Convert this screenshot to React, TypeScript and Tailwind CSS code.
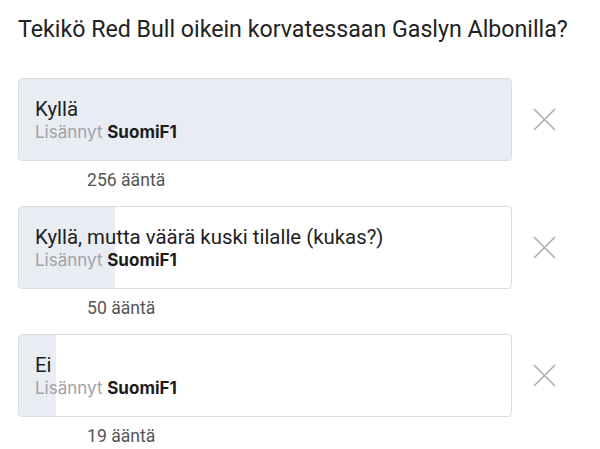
const options = [
  { label: 'Kyllä', votes: 256 },
  { label: 'Kyllä, mutta väärä kuski tilalle (kukas?)', votes: 50 },
  { label: 'Ei', votes: 19 },
];

const max = Math.max(...options.map((o) => o.votes));

export default function App() {
  return (
    <div className="w-[600px] h-[449px] bg-white overflow-hidden font-['Roboto',sans-serif]">
      <h1 className="pl-[18px] pt-[15px] text-[23.2px] leading-[28px] text-[#222222]">
        Tekikö Red Bull oikein korvatessaan Gaslyn Albonilla?
      </h1>

      <div className="mt-[35px] pl-[18px]">
        {options.map((o) => (
          <div key={o.label}>
            <div className="flex items-center">
              <div className="relative w-[494px] h-[83px] rounded-[4px] border border-[#d9dce2] bg-white overflow-hidden">
                {/* vote share bar */}
                <div
                  className="absolute inset-y-0 left-0 bg-[#e9ecf3]"
                  style={{ width: `${(o.votes / max) * 100}%` }}
                />
                <div className="relative h-full flex flex-col justify-center pl-[16px]">
                  <div className="text-[20.4px] leading-[24px] text-[#1e1e1e]">{o.label}</div>
                  <div className="text-[17px] leading-[22px] text-[#9ea2a9] font-['Inter',sans-serif]">
                    Lisännyt <span className="font-bold text-[#1c1c1c]">SuomiF1</span>
                  </div>
                </div>
              </div>
              <button className="ml-[21px] w-[23px] h-[23px] text-[#a9adb2]">
                <svg viewBox="0 0 24 24" className="w-full h-full" fill="none" stroke="currentColor" strokeWidth="1.6">
                  <path d="M1 1L23 23M23 1L1 23" />
                </svg>
              </button>
            </div>
            <div className="pl-[69px] h-[45px] pt-[8px] leading-[22px] text-[17.6px] text-[#555555]">
              {o.votes} ääntä
            </div>
          </div>
        ))}
      </div>
    </div>
  );
}
